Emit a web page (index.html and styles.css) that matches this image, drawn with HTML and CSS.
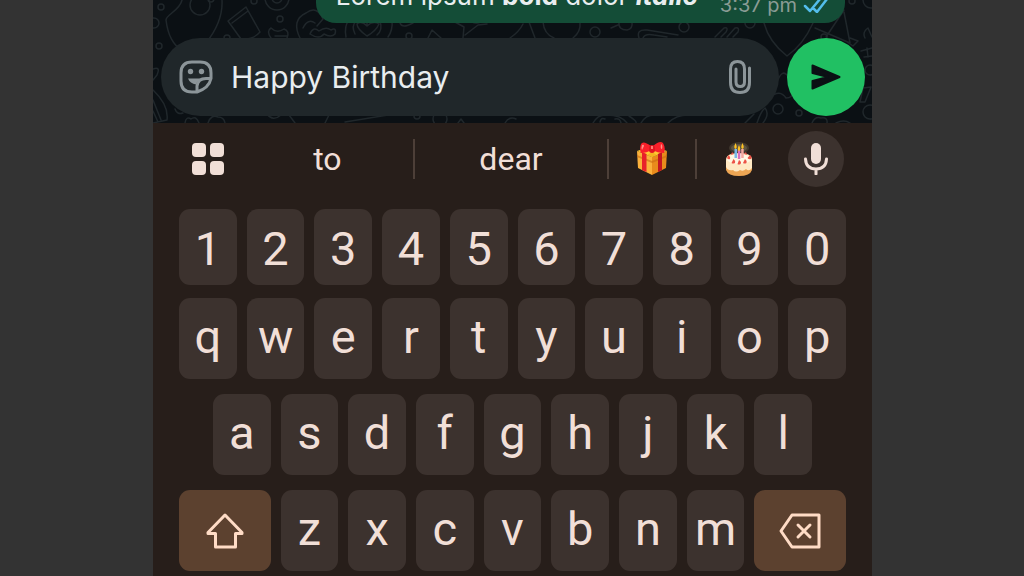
FILE: index.html
```html
<!DOCTYPE html>
<html lang="en">

<head>
    <meta charset="UTF-8">
    <meta name="viewport" content="width=device-width, initial-scale=1.0">
    <title>Chat</title>
    <link rel="stylesheet" href="styles.css">
</head>

<body>

    <div class="phone">

        <!-- Chat Start -->
        <main class="chat">
            <svg class="doodles" viewBox="0 0 719 123" preserveAspectRatio="xMidYMid slice" aria-hidden="true">
                <circle cx="47" cy="5" r="10" />
                <circle cx="8" cy="7" r="3" />
                <circle cx="1" cy="23" r="5" />
                <circle cx="6" cy="46" r="3" />
                <circle cx="58" cy="-1" r="3" />
                <path d="M29 0C27 10 13 15 13 20C15 36 20 44 29 51M69 0C70 18 61 33 53 43" />
                <path d="M75 21L93 7L107 32Q100 40 88 39ZM79 23L95 11" />
                <circle cx="124" cy="-2" r="12" />
                <circle cx="124" cy="-2" r="5" />
                <circle cx="127" cy="19" r="3" />
                <circle cx="74" cy="38" r="3" />
                <circle cx="101" cy="1" r="3" />
                <path d="M118 38Q113 31 118 28Q124 34 131 29Q137 31 134 38M122 36h12" />
                <path d="M147 38Q138 20 153 13Q164 5 170 19L164 26M150 28Q155 18 162 23M157 34Q160 26 166 31Q173 26 178 30Q184 27 182 34Q178 38 171 34Q166 40 157 34" />
                <path d="M193 37Q191 26 196 20M239 20Q240 30 235 37M202 34Q198 26 203 21M227 21Q230 30 224 35M214 36Q204 29 204 24Q208 20 214 26Q220 20 226 24Q223 31 214 36M214 21v4" />
                <path d="M247 23Q249 29 260 23M275 38L279 30L288 38M310 38L311 27L302 22M312 35L325 25L334 24M319 22Q323 24 328 22" />
                <circle cx="256" cy="36" r="3" />
                <path d="M357 38Q366 32 370 24M376 22L382 38M390 22Q391 34 401 38M420 38Q428 32 427 22" />
                <circle cx="442" cy="32" r="5" />
                <path d="M458 28l7-3M466 22q-1 8 8 8q6-1 5-8" />
                <circle cx="531" cy="27" r="5" />
                <path d="M486 38Q483 29 494 30L525 35M490 38Q492 33 501 35L514 37M562 37l9-9q5-1 2 4l-5 5M574 37l8-9q5-1 3 4l-5 5" />
                <path d="M611 23Q616 42 634 56Q650 45 660 23M673 37L691 10M662 28L697 43L691 12M697 38l8 3l-5 5l-6-4" />
                <circle cx="597" cy="23" r="5" />
                <circle cx="671" cy="37" r="3" />
                <circle cx="699" cy="1" r="3" />
                <circle cx="718" cy="0" r="8" />
                <path d="M712 38q-3-6 3-10l4 9M708 51l11-3M711 57l8-1M714 48l1 9M718 87l-6 15h-5l3-14Z" />
                <circle cx="717" cy="70" r="5" />
                <circle cx="717" cy="112" r="7" />
                <circle cx="625" cy="109" r="5" />
                <circle cx="646" cy="113" r="3" />
                <path d="M624 82Q629 69 634 75M617 97q10-8 16 1q7 0 6-6M604 123q4-12 8-15q5 6-2 15M592 123l9-9" />
                <path d="M0 69q8-3 4 6L0 80M0 90Q16 105 14 120L0 123M0 100l8 20M0 111l5 11M22 109q2 6 8 4" />
                <path d="M32 123q1-7 6-4q5-4 8 4M55 123q3-9 10-6q6 0 7 6M114 114q6 8 14 1M136 115L142 123M176 115L172 123M192 122l43-7" />
                <path d="M440 123q5-9 14-8q14 0 20 8M447 122q1-5 5-3M462 119q5-1 6 4M476 116q8 5 7 7M488 123q5-9 15-8M515 123q8-8 20-8" />
                <circle cx="264" cy="116" r="3" />
                <circle cx="287" cy="119" r="7" />
                <path d="M305 123l3-4l3 4M352 123q4-7 11-4M659 123q3-7 9-5q7-1 6 5M683 123q8-4 14 0" />
            </svg>

            <div class="bubble">
                <p class="message">Lorem ipsum <strong>bold</strong> dolor <strong><em>italic</em></strong></p>
                <span class="meta">
                    3:37 pm
                    <svg class="ticks" viewBox="0 0 26 16" role="img" aria-label="Read">
                        <path d="M2 9l5 5L17 2M11 12l3 3L24 2" />
                    </svg>
                </span>
            </div>

            <form class="composer">
                <div class="field">
                    <button type="button" class="icon-button" aria-label="Stickers">
                        <svg class="sticker" viewBox="0 0 34 34">
                            <path class="line" d="M18 32H13Q2 32 2 21V13Q2 2 13 2H21Q32 2 32 13V18.5Q30 28 18 32ZM18 31V26Q19 18.5 27 18.5H31" />
                            <path d="M9 18.5H23Q18 21 17 24.500Q11 23.500 9 18.500Z" />
                            <circle cx="11.500" cy="11.500" r="2.700" />
                            <circle cx="22.500" cy="11.500" r="2.700" />
                        </svg>
                    </button>
                    <input type="text" class="text-input" value="Happy Birthday" aria-label="Message">
                    <button type="button" class="icon-button" aria-label="Attach">
                        <svg class="clip" viewBox="0 0 22 34">
                            <path d="M20.500 8V22.500Q20.500 32.500 11 32.500Q1.500 32.500 1.500 22.500V9Q1.500 1.500 8.500 1.500Q15.500 1.500 15.500 9V22Q15.500 26.500 11.300 26.500Q7 26.500 7 22V9" />
                        </svg>
                    </button>
                </div>
                <button type="submit" class="send" aria-label="Send">
                    <svg viewBox="0 0 30 26">
                        <path d="M1.500 1.500L28.500 13L1.500 24.500V17L17 13L1.500 9Z" />
                    </svg>
                </button>
            </form>
        </main>

        <!-- Keyboard Start -->
        <section class="keyboard" aria-label="Keyboard">
            <div class="suggestions">
                <button class="menu" aria-label="Keyboard menu">
                    <span></span><span></span><span></span><span></span>
                </button>
                <button class="word first">to</button>
                <button class="word">dear</button>
                <button class="emoji" aria-label="Gift">
                    <svg viewBox="0 0 32 34">
                        <path fill="#fbb13c" d="M1 9L16 15V33L2 26Z" />
                        <path fill="#e98b1c" d="M31 9L16 15V33L30 26Z" />
                        <path fill="#ffc934" d="M1 9L16 4L31 9L16 15Z" />
                        <path fill="#c96a12" d="M1 13L16 19L31 13V15L16 21L1 15Z" opacity=".6" />
                        <path fill="#e8202a" d="M6 10l4.500 2V30L6 28Z" />
                        <path fill="#c4161f" d="M26 10l-4 2V30l4-2Z" />
                        <path fill="#f3b51f" d="M11 13l5-3l5 3l-5 2Z" />
                        <path fill="#f8202a" d="M15 4Q7-2 5 2Q3 7 5 11Q11 11 15 8ZM17 4Q24-2 27 1Q30 6 28 11Q21 11 17 8Z" />
                        <path fill="#ff8d86" d="M6 3q2-1 2 1l-2 4q-1-2 0-5M25 2q2 1 1 5q-2 0-1-5" />
                        <rect fill="#e11520" x="13" y="3" width="6" height="8" rx="3" />
                        <path fill="#ff7b72" d="M15 4h2v3h-2Z" />
                    </svg>
                </button>
                <button class="emoji" aria-label="Birthday cake">
                    <svg viewBox="0 0 32 34">
                        <ellipse cx="16" cy="6" rx="10" ry="6" fill="#40382e" />
                        <ellipse cx="16" cy="6" rx="8" ry="4" fill="#5d5443" />
                        <path fill="#eda654" d="M3 20H29V28Q27 34 16 34Q5 34 3 28Z" />
                        <path fill="#ffe9c4" d="M3 18Q3 11 16 11Q29 11 29 18V26Q26 30 23 27Q20 30 17 28Q13 31 10 28Q5 29 3 25Z" />
                        <ellipse cx="16" cy="17" rx="12" ry="5" fill="#fff8e4" />
                        <path fill="#79b9e8" d="M11.500 7h2.500v9h-2.500Z" />
                        <path fill="#dc70bc" d="M14.800 8h2.500v9h-2.500Z" />
                        <path fill="#f3a7a0" d="M18.200 7h2.500v9h-2.500Z" />
                        <path fill="#ffc223" d="M12.500 1q2.500 5 0 6q-2.500-1 0-6M16 3q2.500 5 0 6q-2.500-1 0-6M19.500 1q2.500 5 0 6q-2.500-1 0-6" />
                        <path fill="#ed5346" d="M5.500 13q2.500 2 1.500 4q-2 1-3-1ZM10.500 17q2.500 2 1.500 4q-2 1-3.500 0ZM16 18q3 2 1.500 4q-2 1-3 0ZM22 17q2.500 2 1.500 4q-2 1-3.500 0ZM27 13q2.500 2 1 4q-2 1-3.500-1ZM9 10l2 2l-3 1ZM23 10l1 3l-3-1Z" />
                    </svg>
                </button>
                <button class="mic" aria-label="Voice typing">
                    <svg viewBox="0 0 24 32">
                        <rect x="7" y="0" width="10" height="21" rx="5" />
                        <path d="M1.500 16Q2 26 12 26Q22 26 22.500 16M12 26V31" />
                    </svg>
                </button>
            </div>

            <div class="key-row numbers">
                <button class="key">1</button>
                <button class="key">2</button>
                <button class="key">3</button>
                <button class="key">4</button>
                <button class="key">5</button>
                <button class="key">6</button>
                <button class="key">7</button>
                <button class="key">8</button>
                <button class="key">9</button>
                <button class="key">0</button>
            </div>
            <div class="key-row">
                <button class="key">q</button>
                <button class="key">w</button>
                <button class="key">e</button>
                <button class="key">r</button>
                <button class="key">t</button>
                <button class="key">y</button>
                <button class="key">u</button>
                <button class="key">i</button>
                <button class="key">o</button>
                <button class="key">p</button>
            </div>
            <div class="key-row middle">
                <button class="key">a</button>
                <button class="key">s</button>
                <button class="key">d</button>
                <button class="key">f</button>
                <button class="key">g</button>
                <button class="key">h</button>
                <button class="key">j</button>
                <button class="key">k</button>
                <button class="key">l</button>
            </div>
            <div class="key-row">
                <button class="key action" aria-label="Shift">
                    <svg viewBox="0 0 38 36">
                        <path d="M19 2L36 19.500V20.500H29.500V34H9.500V20.500H2V19.500Z" />
                    </svg>
                </button>
                <button class="key">z</button>
                <button class="key">x</button>
                <button class="key">c</button>
                <button class="key">v</button>
                <button class="key">b</button>
                <button class="key">n</button>
                <button class="key">m</button>
                <button class="key action" aria-label="Backspace">
                    <svg class="backspace" viewBox="0 0 42 36">
                        <path d="M13 2H40V34H13L2 18ZM19 12L31 24M31 12L19 24" />
                    </svg>
                </button>
            </div>
        </section>

    </div>

</body>

</html>
```
FILE: styles.css
```css
/* Reset CSS */
* {
    margin: 0;
    padding: 0;
    box-sizing: border-box;
}

:root {
    --chat-bg: #0b1014;
    --field-bg: #20272a;
    --keyboard-bg: #271e1a;
    --key-bg: #3c322e;
    --key-text: #f1dfd7;
    --action-bg: #5c412f;
    --action-text: #ffdcc6;
}

body {
    background: #333333;
    font-family: Inter, Roboto, sans-serif;
    min-height: 100vh;
    padding-left: 1px;
    overflow: hidden;
}

button,
input {
    border: none;
    outline: none;
    background: transparent;
    font-family: inherit;
    color: inherit;
}

button {
    cursor: pointer;
}

svg {
    display: block;
    fill: none;
    stroke-linecap: round;
    stroke-linejoin: round;
}

.phone {
    width: 100%;
    max-width: 719px;
    min-height: 100vh;
    margin: 0 auto;
    background: var(--keyboard-bg);
}

/* Chat */
.chat {
    position: relative;
    display: flex;
    flex-direction: column;
    justify-content: flex-end;
    gap: 15px;
    height: 123px;
    padding: 0 7px 7px 8px;
    background: var(--chat-bg);
    overflow: hidden;
}

.doodles {
    position: absolute;
    inset: 0;
    width: 100%;
    height: 100%;
    stroke: #20272b;
    stroke-width: 1.5;
}

.bubble {
    position: relative;
    display: flex;
    align-items: flex-end;
    align-self: flex-end;
    gap: 22px;
    margin-right: 20px;
    padding: 10px 16px 6px 20px;
    border-radius: 20px;
    background: #144d37;
    color: #e9edef;
}

.message {
    font-size: 26px;
    line-height: 32px;
    padding-bottom: 5px;
    white-space: nowrap;
}

.meta {
    display: flex;
    align-items: center;
    gap: 6px;
    font-size: 20px;
    line-height: 24px;
    color: #8a9c95;
    white-space: nowrap;
}

.ticks {
    width: 26px;
    height: 16px;
    stroke: #53bdeb;
    stroke-width: 2.5;
}

.composer {
    position: relative;
    display: flex;
    gap: 8px;
}

.field {
    flex: 1;
    display: flex;
    align-items: center;
    min-width: 0;
    padding: 0 28px 0 18px;
    border-radius: 39px;
    background: var(--field-bg);
}

.icon-button {
    flex: none;
    color: #8c9599;
}

.sticker {
    width: 34px;
    height: 34px;
    fill: currentColor;
}

.sticker .line {
    fill: none;
    stroke: currentColor;
    stroke-width: 3;
}

.clip {
    width: 22px;
    height: 34px;
    stroke: currentColor;
    stroke-width: 3;
}

.text-input {
    flex: 1;
    min-width: 0;
    padding: 0 18px;
    font-size: 30px;
    color: #e9edef;
}

.send {
    display: grid;
    place-items: center;
    flex: none;
    width: 78px;
    height: 78px;
    border-radius: 50%;
    background: #21c063;
}

.send svg {
    width: 30px;
    height: 26px;
    fill: var(--chat-bg);
    stroke: var(--chat-bg);
    stroke-width: 2;
}

/* Keyboard */
.keyboard {
    padding: 0 26px 5px;
    font-family: Roboto, Inter, sans-serif;
    color: var(--key-text);
}

.suggestions {
    display: flex;
    align-items: center;
    height: 72px;
    margin-bottom: 14px;
    padding-right: 2px;
}

.menu {
    display: grid;
    grid-template-columns: 14px 14px;
    justify-content: center;
    gap: 4px;
    width: 58px;
    margin-right: 5px;
}

.menu span {
    height: 14px;
    border-radius: 4px;
    background: var(--key-text);
}

.word,
.emoji {
    display: grid;
    place-items: center;
    height: 40px;
    border-left: 2px solid #4d3f38;
}

.word {
    flex: 97;
    font-size: 32px;
}

.word.first {
    flex: 86;
    border-left: none;
}

.emoji {
    flex: 43;
}

.emoji svg {
    width: 32px;
    height: 34px;
}

.mic {
    display: grid;
    place-items: center;
    flex: none;
    width: 56px;
    height: 56px;
    margin-left: 6px;
    border-radius: 50%;
    background: var(--key-bg);
}

.mic svg {
    width: 24px;
    height: 32px;
    stroke: var(--key-text);
    stroke-width: 3;
}

.mic rect {
    fill: var(--key-text);
    stroke: none;
}

.key-row {
    display: grid;
    grid-template-columns: repeat(20, minmax(0, 1fr));
    column-gap: 10px;
    margin-bottom: 15px;
}

.key-row.numbers {
    margin-bottom: 13px;
}

.key-row.middle .key:first-child {
    grid-column-start: 2;
}

.key {
    display: grid;
    place-items: center;
    grid-column-end: span 2;
    height: 81px;
    padding-bottom: 5px;
    border-radius: 11px;
    background: var(--key-bg);
    font-size: 47px;
}

.numbers .key {
    height: 76px;
    padding-top: 2px;
    padding-bottom: 0;
}

.key.action {
    grid-column-end: span 3;
    padding-bottom: 0;
    background: var(--action-bg);
}

.action svg {
    width: 38px;
    height: 36px;
    stroke: var(--action-text);
    stroke-width: 3;
}

.action .backspace {
    width: 42px;
}
```
